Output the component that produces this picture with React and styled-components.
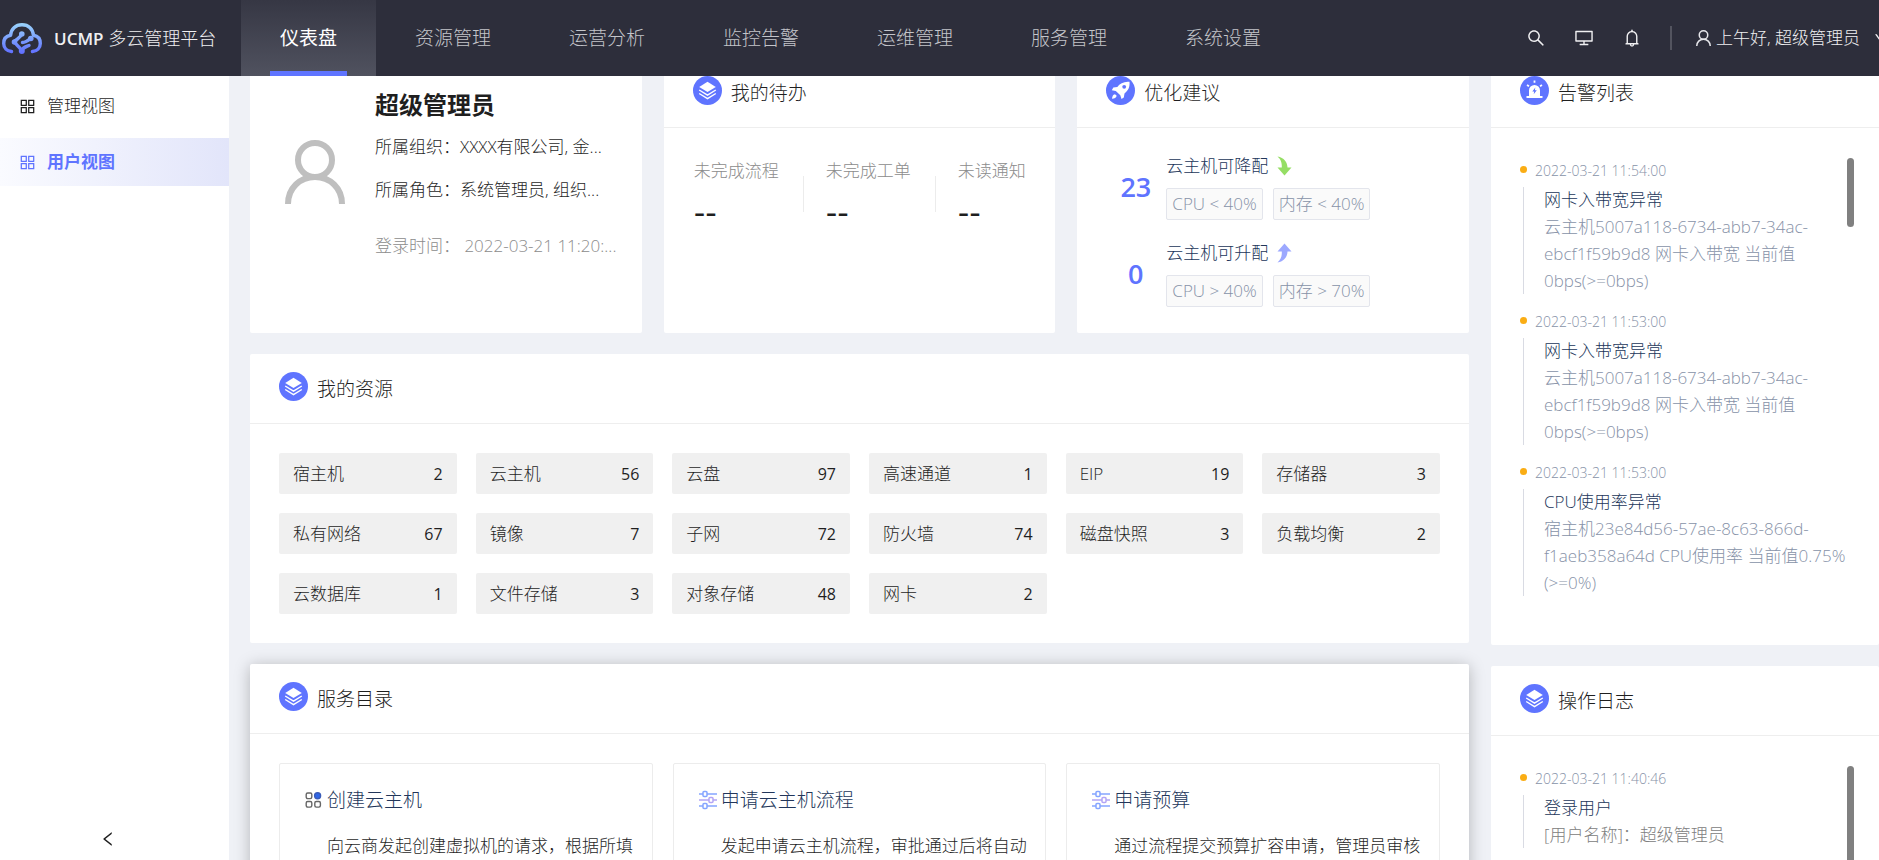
import React from 'react';
import styled, { createGlobalStyle } from 'styled-components';
import {
  AiOutlineAppstore,
  AiOutlineBell,
  AiOutlineDesktop,
  AiOutlineDown,
  AiOutlineLeft,
  AiOutlineSearch,
} from 'react-icons/ai';

const GlobalStyle = createGlobalStyle`
  * {
    box-sizing: border-box;
  }

  body {
    margin: 0;
    background-color: #eff1f6;
    color: #1f1f1f;
    font-family: 'Open Sans', 'Noto Sans CJK SC', sans-serif;
    font-size: 17px;
    font-weight: 300;
    line-height: 26px;
  }

  h1, h2, h3, p, ul, dl, dd {
    margin: 0;
    padding: 0;
    font-weight: inherit;
  }

  ul {
    list-style: none;
  }

  a {
    color: inherit;
    text-decoration: none;
  }

  button {
    display: inline-flex;
    align-items: center;
    padding: 0;
    border: none;
    background: none;
    color: inherit;
    font: inherit;
    cursor: pointer;
  }
`;

const Page = styled.div`
  display: flex;
  flex-direction: column;
  height: 100vh;
  overflow: hidden;
`;

const Header = styled.header`
  display: flex;
  flex-shrink: 0;
  height: 76px;
  background-color: #2d2e3b;
  color: #f0f0f2;
  overflow: hidden;
  z-index: 2;
`;

const Brand = styled.a`
  display: flex;
  align-items: center;
  flex-shrink: 0;
  gap: 12px;
  width: 241px;
  padding-left: 2px;
  font-size: 18px;
  white-space: nowrap;

  strong {
    font-size: 17px;
    font-weight: 600;
  }
`;

const Nav = styled.nav`
  display: flex;
  flex: 1;
`;

const NavLink = styled.a`
  display: flex;
  align-items: center;
  justify-content: center;
  position: relative;
  padding: 0 39px;
  font-size: 19px;
  white-space: nowrap;
  color: ${(props) => (props.$active ? '#fff' : '#c4c5ca')};
  font-weight: ${(props) => (props.$active ? 400 : 300)};
  background: ${(props) => (props.$active ? 'linear-gradient(#363744, #50525f)' : 'none')};

  &::after {
    content: '';
    display: ${(props) => (props.$active ? 'block' : 'none')};
    position: absolute;
    left: 29px;
    right: 29px;
    bottom: 0;
    height: 5px;
    background-color: #5f74ff;
  }
`;

const Tools = styled.div`
  display: flex;
  align-items: center;
  gap: 28px;
  white-space: nowrap;
  font-size: 20px;
`;

const Divider = styled.span`
  width: 2px;
  height: 24px;
  background-color: #53545f;
`;

const UserMenu = styled.button`
  && {
    gap: 5px;
    margin-left: -4px;
    margin-right: -11px;
    font-size: 17px;
  }

  .arrow {
    margin-left: 8px;
  }
`;

const Layout = styled.div`
  display: flex;
  flex: 1;
  min-height: 0;
`;

const Sidebar = styled.aside`
  display: flex;
  flex-direction: column;
  justify-content: space-between;
  flex-shrink: 0;
  width: 229px;
  padding: 6px 0 12px;
  background-color: #fff;
`;

const Menu = styled.ul`
  display: flex;
  flex-direction: column;
  gap: 8px;
`;

const MenuLink = styled.a`
  display: flex;
  align-items: center;
  gap: 10px;
  height: 48px;
  padding-left: 18px;
  color: ${(props) => (props.$active ? '#5f74ff' : '#1f1f1f')};
  font-weight: ${(props) => (props.$active ? 700 : 300)};
  background: ${(props) => (props.$active ? 'linear-gradient(90deg, #fafbff, #e2e5fa)' : 'none')};

  svg {
    font-size: 19px;
  }
`;

const CollapseButton = styled.button`
  align-self: center;

  && {
    padding-right: 14px;
    font-size: 18px;
  }
`;

const Main = styled.main`
  flex: 1;
  min-width: 0;
  padding-left: 21px;
  overflow: hidden;
`;

/* the board is shown scrolled slightly under the header */
const Board = styled.div`
  display: grid;
  grid-template-columns: minmax(0, 1219fr) minmax(0, 388fr);
  gap: 22px;
  margin-top: -18px;
`;

const Column = styled.div`
  display: flex;
  flex-direction: column;
  gap: 21px;
`;

const TopCards = styled.div`
  display: grid;
  grid-template-columns: repeat(3, minmax(0, 1fr));
  gap: 22px;
`;

const Card = styled.section`
  background-color: #fff;
  border-radius: 2px;
  min-height: ${(props) => props.$minHeight || 0}px;
  box-shadow: ${(props) => (props.$raised ? '0 2px 16px rgba(0, 0, 0, 0.25)' : 'none')};
`;

const CardHead = styled.div`
  display: flex;
  align-items: center;
  gap: 9px;
  height: 70px;
  padding: 0 29px;
  border-bottom: 1px solid #eeeeee;

  h2 {
    font-size: 19px;
  }

  svg {
    margin-bottom: 5px;
  }
`;

const CardBody = styled.div`
  padding: 29px;
`;

const Profile = styled.div`
  display: flex;
  gap: 30px;
  padding: 32px 24px 0 35px;

  > svg {
    margin-top: 50px;
    flex-shrink: 0;
  }

  h2 {
    font-size: 24px;
    font-weight: 700;
    line-height: 30px;
  }

  p {
    margin-top: 17px;
    white-space: nowrap;
  }

  h2 + p {
    margin-top: 14px;
  }
`;

const LoginTime = styled.p`
  && {
    margin-top: 30px;
    color: #8c8c8c;
  }
`;

const TodoList = styled.dl`
  display: flex;
  gap: 47px;
  padding: 30px 0 0 30px;

  > div {
    position: relative;
  }

  > div + div::before {
    content: '';
    position: absolute;
    left: -23px;
    top: 18px;
    height: 36px;
    border-left: 1px solid #ececec;
  }

  dt {
    color: #8c8c8c;
  }

  dd {
    margin-top: 16px;
    font-family: 'DejaVu Sans', sans-serif;
    font-size: 32px;
    font-weight: 400;
  }
`;

const AdviceList = styled.div`
  display: flex;
  flex-direction: column;
  gap: 20px;
  padding: 25px 29px;
`;

const Advice = styled.div`
  display: flex;
  align-items: center;
  gap: 15px;
`;

const AdviceCount = styled.strong`
  flex-shrink: 0;
  width: 45px;
  padding-left: 14px;
  color: #5f74ff;
  font-size: 27px;
  font-weight: 600;
  text-align: center;
`;

const AdviceTitle = styled.h3`
  display: flex;
  align-items: center;
  gap: 9px;
  font-size: 17px;
  color: #22365a;
`;

const Tags = styled.div`
  display: flex;
  gap: 10px;
  margin-top: 9px;
`;

const Tag = styled.span`
  padding: 2px 5px;
  border: 1px solid #e3e5ec;
  border-radius: 2px;
  background-color: #fafafa;
  color: #8792a8;
`;

const ResourceGrid = styled.ul`
  display: grid;
  grid-template-columns: repeat(6, minmax(0, 1fr));
  gap: 19px;
`;

const Resource = styled.li`
  display: flex;
  align-items: center;
  justify-content: space-between;
  height: 41px;
  padding: 0 14px;
  border-radius: 2px;
  background-color: #f0f0f0;

  strong {
    font-size: 16px;
    font-weight: 500;
  }
`;

const ServiceGrid = styled.div`
  display: grid;
  grid-template-columns: repeat(3, minmax(0, 1fr));
  gap: 20px;
`;

const Service = styled.article`
  padding: 23px 16px 23px 25px;
  border: 1px solid #ececec;
  border-radius: 2px;

  h3 {
    display: flex;
    align-items: center;
    gap: 4px;
    font-size: 19px;
    color: #22365a;
  }

  p {
    margin-top: 20px;
    padding-left: 22px;
  }
`;

const Feed = styled.ul`
  position: relative;
  height: ${(props) => props.$height}px;
  margin: 30px 25px 0 29px;
  overflow: hidden;
`;

const FeedThumb = styled.li`
  position: absolute;
  top: 0;
  right: 0;
  width: 7px;
  height: ${(props) => props.$size}px;
  border-radius: 4px;
  background-color: #808080;
`;

const FeedItem = styled.li`
  margin-bottom: 15px;

  time {
    display: flex;
    align-items: center;
    gap: 8px;
    color: #8792a8;
    font-size: 14px;
  }

  time::before {
    content: '';
    width: 7px;
    height: 7px;
    margin-bottom: 3px;
    border-radius: 50%;
    background-color: #faad14;
  }
`;

const FeedText = styled.div`
  margin: 3px 0 0 3px;
  padding-left: 20px;
  border-left: 1px solid #d9dbe3;

  h3 {
    font-size: 17px;
    color: #22365a;
  }

  p {
    color: ${(props) => (props.$muted ? '#808080' : '#8792a8')};
    line-height: 27px;
  }
`;

const LogoIcon = () => (
  <svg width="40" height="31" viewBox="0 0 40 31" fill="none" aria-hidden="true">
    <defs>
      <linearGradient id="logo" x1="0" y1="0" x2="0" y2="31" gradientUnits="userSpaceOnUse">
        <stop offset="0" stopColor="#9ad4fb" />
        <stop offset="1" stopColor="#5f6dff" />
      </linearGradient>
    </defs>
    <g stroke="url(#logo)" strokeWidth="3.4" strokeLinecap="round" strokeLinejoin="round">
      <path d="M9.500 28.500C5 28 1.700 25 1.700 20.500C1.700 16 4.500 13 8.600 12.300C9 6 13.500 1.800 20 1.800C26.500 1.800 31 6 31.400 12.300C35.500 13 38.300 16 38.300 20.500C38.300 25 35 28 30.500 28.500" />
      <path d="M19.500 11.500C18.500 14.500 15.500 15.500 12.500 18.500" />
      <path d="M12.500 18.500C13.500 22 17 22.500 19.500 27.500C21 24.500 23.500 24 27 22.500" />
      <path d="M20.500 19.500C23.500 19.500 25.500 18 28.500 15.500" />
    </g>
    <g fill="url(#logo)">
      <circle cx="19.800" cy="11" r="2.800" />
      <circle cx="12.500" cy="19" r="2.800" />
      <circle cx="28.800" cy="15.500" r="2.800" />
      <circle cx="19.800" cy="28" r="3" />
    </g>
  </svg>
);

const PersonIcon = ({ width, height, stroke, color }) => (
  <svg width={width} height={height} viewBox="0 0 60 64" fill="none" stroke={color} strokeWidth={stroke} aria-hidden="true">
    <circle cx="30" cy="20" r="17" />
    <path d="M3 64C3 48 15 37 30 37S57 48 57 64" />
  </svg>
);

const LayersIcon = () => (
  <svg width="29" height="29" viewBox="0 0 29 29" fill="none" aria-hidden="true">
    <circle cx="14.500" cy="14.500" r="14.500" fill="#5f74ff" />
    <path d="M14.500 5.800L22.800 11L14.500 16L6.200 11Z" fill="#fff" />
    <path d="M6.200 14L14.500 19.200L22.800 14M6.200 17.500L14.500 22.700L22.800 17.500" stroke="#fff" strokeWidth="1.400" />
  </svg>
);

const RocketIcon = () => (
  <svg width="29" height="29" viewBox="0 0 29 29" aria-hidden="true">
    <circle cx="14.500" cy="14.500" r="14.500" fill="#5f74ff" />
    <path d="M23.500 5.800C18 5.200 14 7.500 11.300 10.900L7.300 11.600L5.800 14.200L9.800 14.900L14.300 19.300L15.500 23L17.800 21.500L18.500 17.500C22.300 14.500 24 11 23.500 5.800Z" fill="#fff" />
    <circle cx="18.200" cy="10.800" r="1.900" fill="#5f74ff" />
    <path d="M9 18.200C6.700 18.500 6.300 20.500 6 22.800C8.400 22.500 10.300 22 10.700 19.800Z" fill="#fff" />
  </svg>
);

const AlarmIcon = () => (
  <svg width="29" height="29" viewBox="0 0 29 29" aria-hidden="true">
    <circle cx="14.500" cy="14.500" r="14.500" fill="#5f74ff" />
    <path d="M9 20V14.500A5.500 5.500 0 0 1 20 14.500V20H22.500V22H6.500V20Z" fill="#fff" />
    <path d="M14.500 4.500V6.800M7 9L9 10.200M22 9L20 10.200" stroke="#fff" strokeWidth="1.800" />
    <path d="M15.300 11.500L12.300 15.500H14.200L13.700 18.300L16.800 14.200H14.900Z" fill="#5f74ff" />
  </svg>
);

const TrendIcon = ({ up }) => (
  <svg width="15" height="20" viewBox="0 0 15 20" aria-hidden="true">
    {up ? (
      <path d="M7.500 0.500L14.500 8.500H10.500C10.500 13.500 7 18.500 0.500 19.500C4 16.500 5 13 4.800 8.500H0.500Z" fill="#9ca8ff" />
    ) : (
      <path d="M7.500 19.500L14.500 11.500H10.500C10.500 6.500 7 1.500 0.500 0.500C4 3.500 5 7 4.800 11.500H0.500Z" fill="#95de64" />
    )}
  </svg>
);

const BlocksIcon = () => (
  <svg width="18" height="18" viewBox="0 0 18 18" fill="none" stroke="#666" strokeWidth="1.400" aria-hidden="true">
    <rect x="1.200" y="2" width="5.600" height="5.600" rx="1.500" />
    <rect x="1.200" y="10.500" width="5.600" height="5.600" rx="1.500" />
    <rect x="9.800" y="10.500" width="5.600" height="5.600" rx="1.500" />
    <circle cx="12.600" cy="4.800" r="3" fill="#2f66e8" stroke="#3a5bb8" />
  </svg>
);

const SlidersIcon = () => (
  <svg width="18" height="20" viewBox="0 0 18 20" fill="none" strokeWidth="1.500" aria-hidden="true">
    <path d="M0 4H4M8 4H18M0 16H4M8 16H18" stroke="#85a5ff" />
    <path d="M0 10H10M14 10H18" stroke="#b3a5f5" />
    <rect x="4" y="1.500" width="4" height="5" rx="1" stroke="#85a5ff" />
    <rect x="10" y="7.500" width="4" height="5" rx="1" stroke="#b3a5f5" />
    <rect x="4" y="13.500" width="4" height="5" rx="1" stroke="#85a5ff" />
  </svg>
);

const navItems = ['仪表盘', '资源管理', '运营分析', '监控告警', '运维管理', '服务管理', '系统设置'];

const todos = ['未完成流程', '未完成工单', '未读通知'];

const advices = [
  { count: 23, title: '云主机可降配', up: false, tags: ['CPU < 40%', '内存 < 40%'] },
  { count: 0, title: '云主机可升配', up: true, tags: ['CPU > 40%', '内存 > 70%'] },
];

const resources = [
  ['宿主机', 2],
  ['云主机', 56],
  ['云盘', 97],
  ['高速通道', 1],
  ['EIP', 19],
  ['存储器', 3],
  ['私有网络', 67],
  ['镜像', 7],
  ['子网', 72],
  ['防火墙', 74],
  ['磁盘快照', 3],
  ['负载均衡', 2],
  ['云数据库', 1],
  ['文件存储', 3],
  ['对象存储', 48],
  ['网卡', 2],
];

const services = [
  { icon: <BlocksIcon />, title: '创建云主机', text: '向云商发起创建虚拟机的请求，根据所填' },
  { icon: <SlidersIcon />, title: '申请云主机流程', text: '发起申请云主机流程，审批通过后将自动' },
  { icon: <SlidersIcon />, title: '申请预算', text: '通过流程提交预算扩容申请，管理员审核' },
];

const alerts = [
  {
    time: '2022-03-21 11:54:00',
    title: '网卡入带宽异常',
    text: '云主机5007a118-6734-abb7-34ac-ebcf1f59b9d8 网卡入带宽 当前值0bps(>=0bps)',
  },
  {
    time: '2022-03-21 11:53:00',
    title: '网卡入带宽异常',
    text: '云主机5007a118-6734-abb7-34ac-ebcf1f59b9d8 网卡入带宽 当前值0bps(>=0bps)',
  },
  {
    time: '2022-03-21 11:53:00',
    title: 'CPU使用率异常',
    text: '宿主机23e84d56-57ae-8c63-866d-f1aeb358a64d CPU使用率 当前值0.75%(>=0%)',
  },
];

const logs = [{ time: '2022-03-21 11:40:46', title: '登录用户', text: '[用户名称]：超级管理员' }];

const FeedList = ({ items, height, thumb, muted }) => (
  <Feed $height={height}>
    {items.map((item, index) => (
      <FeedItem key={index}>
        <time>{item.time}</time>
        <FeedText $muted={muted}>
          <h3>{item.title}</h3>
          <p>{item.text}</p>
        </FeedText>
      </FeedItem>
    ))}
    <FeedThumb aria-hidden="true" $size={thumb} />
  </Feed>
);

const App = () => {
  return (
    <Page>
      <GlobalStyle />
      <Header>
        <Brand href="#">
          <LogoIcon />
          <span>
            <strong>UCMP</strong> 多云管理平台
          </span>
        </Brand>
        <Nav>
          {navItems.map((item, index) => (
            <NavLink key={item} href="#" $active={index === 0}>
              {item}
            </NavLink>
          ))}
        </Nav>
        <Tools>
          <button aria-label="搜索"><AiOutlineSearch /></button>
          <button aria-label="大屏"><AiOutlineDesktop /></button>
          <button aria-label="通知"><AiOutlineBell /></button>
          <Divider />
          <UserMenu>
            <PersonIcon width={15} height={16} stroke={6} color="#e6e6ea" />
            上午好, 超级管理员
            <AiOutlineDown className="arrow" />
          </UserMenu>
        </Tools>
      </Header>
      <Layout>
        <Sidebar>
          <Menu>
            <li><MenuLink href="#"><AiOutlineAppstore />管理视图</MenuLink></li>
            <li><MenuLink href="#" $active><AiOutlineAppstore />用户视图</MenuLink></li>
          </Menu>
          <CollapseButton aria-label="收起"><AiOutlineLeft /></CollapseButton>
        </Sidebar>
        <Main>
          <Board>
            <Column>
              <TopCards>
                <Card $minHeight={275}>
                  <Profile>
                    <PersonIcon width={60} height={64} stroke={6} color="#bfbfbf" />
                    <div>
                      <h2>超级管理员</h2>
                      <p>所属组织：XXXX有限公司, 金...</p>
                      <p>所属角色：系统管理员, 组织...</p>
                      <LoginTime>登录时间： 2022-03-21 11:20:...</LoginTime>
                    </div>
                  </Profile>
                </Card>
                <Card>
                  <CardHead><LayersIcon /><h2>我的待办</h2></CardHead>
                  <TodoList>
                    {todos.map((todo) => (
                      <div key={todo}>
                        <dt>{todo}</dt>
                        <dd>--</dd>
                      </div>
                    ))}
                  </TodoList>
                </Card>
                <Card>
                  <CardHead><RocketIcon /><h2>优化建议</h2></CardHead>
                  <AdviceList>
                    {advices.map((advice) => (
                      <Advice key={advice.title}>
                        <AdviceCount>{advice.count}</AdviceCount>
                        <div>
                          <AdviceTitle>{advice.title}<TrendIcon up={advice.up} /></AdviceTitle>
                          <Tags>
                            {advice.tags.map((tag) => <Tag key={tag}>{tag}</Tag>)}
                          </Tags>
                        </div>
                      </Advice>
                    ))}
                  </AdviceList>
                </Card>
              </TopCards>
              <Card>
                <CardHead><LayersIcon /><h2>我的资源</h2></CardHead>
                <CardBody>
                  <ResourceGrid>
                    {resources.map(([name, count]) => (
                      <Resource key={name}>
                        <span>{name}</span>
                        <strong>{count}</strong>
                      </Resource>
                    ))}
                  </ResourceGrid>
                </CardBody>
              </Card>
              <Card $raised>
                <CardHead><LayersIcon /><h2>服务目录</h2></CardHead>
                <CardBody>
                  <ServiceGrid>
                    {services.map((service) => (
                      <Service key={service.title}>
                        <h3>{service.icon}{service.title}</h3>
                        <p>{service.text}</p>
                      </Service>
                    ))}
                  </ServiceGrid>
                </CardBody>
              </Card>
            </Column>
            <Column>
              <Card $minHeight={587}>
                <CardHead><AlarmIcon /><h2>告警列表</h2></CardHead>
                <FeedList items={alerts} height={458} thumb={69} />
              </Card>
              <Card $minHeight={400}>
                <CardHead><LayersIcon /><h2>操作日志</h2></CardHead>
                <FeedList items={logs} height={300} thumb={200} muted />
              </Card>
            </Column>
          </Board>
        </Main>
      </Layout>
    </Page>
  );
};

export default App;
